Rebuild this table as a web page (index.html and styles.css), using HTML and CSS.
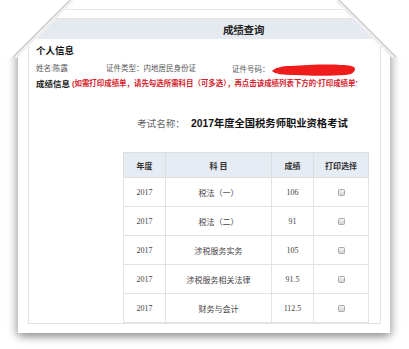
FILE: index.html
```html
<!DOCTYPE html>
<html>
<head>
<meta charset="utf-8">
<link rel="stylesheet" href="styles.css">
</head>
<body>
<div class="stage">
  <div class="frame">
    <div class="topline"></div>
    <div class="box">
      <div class="bar"><span class="bar-title">成绩查询</span></div>
      <div class="content">
        <div class="sec-title">个人信息</div>
        <div class="info">
          <span>姓名:陈露</span>
          <span>证件类型：内地居民身份证</span>
          <span class="idno">证件号码：<svg class="blob" width="86" height="14" viewBox="0 0 86 14"><path d="M1 8 C4 5 10 3 20 3 C35 2 55 1 70 2 C78 2 84 3 84 6 C84 9 80 12 74 12 C60 13 40 13 24 12 C12 12 4 11 1 8 Z" fill="#f01c1c"/></svg></span>
        </div>
        <div class="notice"><b class="notice-label">成绩信息</b><span class="notice-red">(如需打印成绩单，请先勾选所需科目（可多选），再点击该成绩列表下方的‘打印成绩单’</span></div>
        <div class="exam"><span class="exam-label">考试名称：</span><b class="exam-name">2017年度全国税务师职业资格考试</b></div>
        <table class="scores">
          <colgroup><col class="c1"><col class="c2"><col class="c3"><col class="c4"></colgroup>
          <thead>
            <tr><th>年度</th><th>科 目</th><th>成绩</th><th>打印选择</th></tr>
          </thead>
          <tbody>
            <tr><td>2017</td><td>税法（一）</td><td>106</td><td><span class="cb"></span></td></tr>
            <tr><td>2017</td><td>税法（二）</td><td>91</td><td><span class="cb"></span></td></tr>
            <tr><td>2017</td><td>涉税服务实务</td><td>105</td><td><span class="cb"></span></td></tr>
            <tr><td>2017</td><td>涉税服务相关法律</td><td>91.5</td><td><span class="cb"></span></td></tr>
            <tr><td>2017</td><td>财务与会计</td><td>112.5</td><td><span class="cb"></span></td></tr>
          </tbody>
        </table>
      </div>
    </div>
  </div>
  <svg class="corners" width="409" height="70" viewBox="0 0 409 70">
    <polygon points="0,0 70,0 13,57 0,57" fill="#fff"/>
    <polygon points="339,0 409,0 409,57 396,57" fill="#fff"/>
    <line x1="72" y1="0" x2="15" y2="57" stroke="#f0f0f0" stroke-width="4"/>
    <line x1="70" y1="0" x2="13" y2="57" stroke="#c9c9c9" stroke-width="1.2"/>
    <line x1="337" y1="0" x2="394" y2="57" stroke="#f0f0f0" stroke-width="4"/>
    <line x1="339" y1="0" x2="396" y2="57" stroke="#c9c9c9" stroke-width="1.2"/>
  </svg>
</div>
</body>
</html>
```
FILE: styles.css
```css
* { box-sizing: border-box; }
html, body { margin: 0; padding: 0; background: #fff; }
body { font-family: "Liberation Sans", "Noto Sans CJK SC", sans-serif; color: #333; }
.stage { position: relative; width: 409px; height: 349px; overflow: hidden; background: #fff; }
.frame {
  margin: 0 19px 0 18px;
  height: 333px;
  background: #fff;
  padding-top: 9px;
  box-shadow: 0 5px 8px rgba(0,0,0,0.25), -5px 2px 7px rgba(0,0,0,0.13), 5px 2px 7px rgba(0,0,0,0.13);
  display: flex;
  flex-direction: column;
}
.topline { border-top: 1px solid #e6e6e6; margin: 0 8px 0 10px; height: 9px; }
.box {
  margin: 0 9px 0 10px;
  border: 1px solid #e2e2e2;
  height: 306px;
}
.bar { height: 20px; background: #e4eaf0; padding-left: 194px; display: flex; align-items: center; }
.bar-title { font-size: 10.5px; font-weight: bold; color: #222; letter-spacing: -0.2px; }
.content { padding-left: 7px; }
.sec-title { font-size: 9.5px; font-weight: bold; color: #111; line-height: 14px; margin-top: 5px; }
.info { display: grid; grid-template-columns: 70px 126px auto; margin-top: 5px; height: 12px; line-height: 12px; font-size: 7.5px; color: #555; }
.idno { display: flex; align-items: center; }
.blob { margin-left: 1px; }
.notice { margin-top: 3px; line-height: 12px; white-space: nowrap; display: flex; align-items: center; }
.notice-label { font-size: 8.5px; color: #222; margin-right: 2px; }
.notice-red { font-size: 7.45px; font-weight: bold; color: #d6202a; }
.exam { margin-top: 27px; padding-left: 101px; line-height: 14px; display: flex; align-items: center; }
.exam-label { font-size: 9.6px; color: #666; margin-right: 6px; }
.exam-name { font-size: 10.3px; color: #111; }
.scores {
  margin-top: 21px;
  margin-left: 87px;
  width: 245px;
  border-collapse: collapse;
  table-layout: fixed;
  font-size: 7.5px;
  color: #444;
}
.c1 { width: 42px; } .c2 { width: 106px; } .c3 { width: 42px; } .c4 { width: 55px; }
.scores th { height: 25px; background: #e6ecf3; font-size: 8px; font-weight: bold; color: #333; border: 1px solid #dedede; text-align: center; padding: 0; }
.scores td { height: 29px; border: 1px solid #e2e2e2; text-align: center; padding: 0; font-family: "Liberation Serif", "Noto Sans CJK SC", serif; font-size: 8px; }
.cb { display: inline-block; width: 7px; height: 7px; border: 1px solid #a8a8a8; border-radius: 1.5px; background: linear-gradient(#f4f4f4, #d4d4d4); vertical-align: middle; }
.corners { position: absolute; left: 0; top: 0; }
```
